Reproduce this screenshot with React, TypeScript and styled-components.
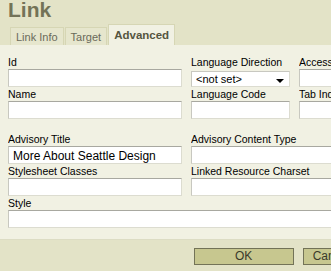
import React from 'react';
import styled, {createGlobalStyle} from 'styled-components';

const GlobalStyle = createGlobalStyle`
    html, body {
        margin: 0;
        padding: 0;
        overflow: hidden;
        background: #f1f1e3;
    }
`;

const Dialog = styled.div`
    width: 369px;
    font-family: 'Liberation Sans', Arial, sans-serif;
    font-size: 11px;
`;

const Header = styled.div`
    background: #e3e3c7;
    padding: 0 0 0 8px;
    height: 45px;
    display: flex;
    flex-direction: column;
`;

const Title = styled.div`
    font-size: 21px;
    font-weight: bold;
    color: #737357;
    line-height: 20px;
    height: 24px;
`;

const Tabs = styled.div`
    display: flex;
    align-items: flex-end;
    margin-left: 2px;
    flex: 1;
`;

interface ITabProps {
    readonly active?: boolean;
}

const Tab = styled.div<ITabProps>`
    box-sizing: border-box;
    height: ${props => props.active ? '21px' : '18px'};
    padding: 0 5px;
    display: flex;
    align-items: center;
    font-size: ${props => props.active ? '11.5px' : '11px'};
    font-weight: ${props => props.active ? 'bold' : 'normal'};
    color: ${props => props.active ? '#55553f' : '#6a6a5a'};
    background: ${props => props.active ? '#f1f1e3' : '#e6e6cd'};
    border: 1px solid #d6d6b4;
    border-bottom: none;
    margin-right: 1px;
`;

const Content = styled.div`
    padding: 11px 0 10px 8px;
    border-bottom: 1px solid #dcdcc4;
`;

const Grid = styled.div`
    display: grid;
    grid-template-columns: 174px 99px 1fr;
    column-gap: 9px;
`;

interface IFieldProps {
    readonly span?: number;
    readonly gapTop?: number;
}

const Field = styled.div<IFieldProps>`
    display: flex;
    flex-direction: column;
    grid-column: span ${props => props.span || 1};
    margin-top: ${props => props.gapTop || 0}px;
    margin-bottom: 1px;
    min-width: 0;
`;

const Label = styled.label`
    color: #000;
    font-size: 10.5px;
    line-height: 13px;
    height: 13px;
    white-space: nowrap;
    overflow: hidden;
`;

const Input = styled.input`
    box-sizing: border-box;
    height: 18px;
    width: 100%;
    margin: 0;
    padding: 1px 4px 0;
    background: #fff;
    border: 1px solid;
    border-color: #a8a8a0 #dcdcd0 #dcdcd0 #c8c8c0;
    font-family: 'Liberation Sans', Arial, sans-serif;
    font-size: 12px;
    color: #000;
    outline: none;
`;

const Select = styled.div`
    box-sizing: border-box;
    height: 16px;
    margin-top: 2px;
    display: flex;
    align-items: center;
    justify-content: space-between;
    padding: 0 5px 0 4px;
    background: #fff;
    border: 1px solid;
    border-color: #c8c8c0 #dcdcd0 #dcdcd0 #c8c8c0;
    color: #000;
    font-size: 11px;
`;

const Arrow = styled.span`
    width: 0;
    height: 0;
    border-left: 4px solid transparent;
    border-right: 4px solid transparent;
    border-top: 4px solid #000;
    margin-top: 3px;
`;

const Footer = styled.div`
    background: #e3e3c7;
    height: 31px;
    display: flex;
    align-items: flex-start;
    justify-content: flex-end;
    gap: 9px;
    padding: 8px 9px 0 0;
    box-sizing: border-box;
`;

interface IButtonProps {
    readonly width?: number;
}

const Button = styled.button<IButtonProps>`
    box-sizing: border-box;
    width: ${props => props.width ? `${props.width}px` : 'auto'};
    height: 17px;
    padding: 0 9px;
    background: #c7c78f;
    border: 1px solid #737357;
    color: #3a3a2a;
    font-family: 'Liberation Sans', Arial, sans-serif;
    font-size: 12px;
    line-height: 15px;
`;

export default () => {
    return (
        <Dialog>
            <GlobalStyle />
            <Header>
                <Title>Link</Title>
                <Tabs>
                    <Tab>Link Info</Tab>
                    <Tab>Target</Tab>
                    <Tab active>Advanced</Tab>
                </Tabs>
            </Header>
            <Content>
                <Grid>
                    <Field>
                        <Label>Id</Label>
                        <Input />
                    </Field>
                    <Field>
                        <Label>Language Direction</Label>
                        <Select>
                            <span>&lt;not set&gt;</span>
                            <Arrow />
                        </Select>
                    </Field>
                    <Field>
                        <Label>Access Key</Label>
                        <Input />
                    </Field>

                    <Field>
                        <Label>Name</Label>
                        <Input />
                    </Field>
                    <Field>
                        <Label>Language Code</Label>
                        <Input />
                    </Field>
                    <Field>
                        <Label>Tab Index</Label>
                        <Input />
                    </Field>

                    <Field gapTop={13}>
                        <Label>Advisory Title</Label>
                        <Input defaultValue="More About Seattle Design" />
                    </Field>
                    <Field gapTop={13} span={2}>
                        <Label>Advisory Content Type</Label>
                        <Input />
                    </Field>

                    <Field>
                        <Label>Stylesheet Classes</Label>
                        <Input />
                    </Field>
                    <Field span={2}>
                        <Label>Linked Resource Charset</Label>
                        <Input />
                    </Field>

                    <Field span={3}>
                        <Label>Style</Label>
                        <Input />
                    </Field>
                </Grid>
            </Content>
            <Footer>
                <Button width={100}>OK</Button>
                <Button>Cancel</Button>
            </Footer>
        </Dialog>
    );
};
